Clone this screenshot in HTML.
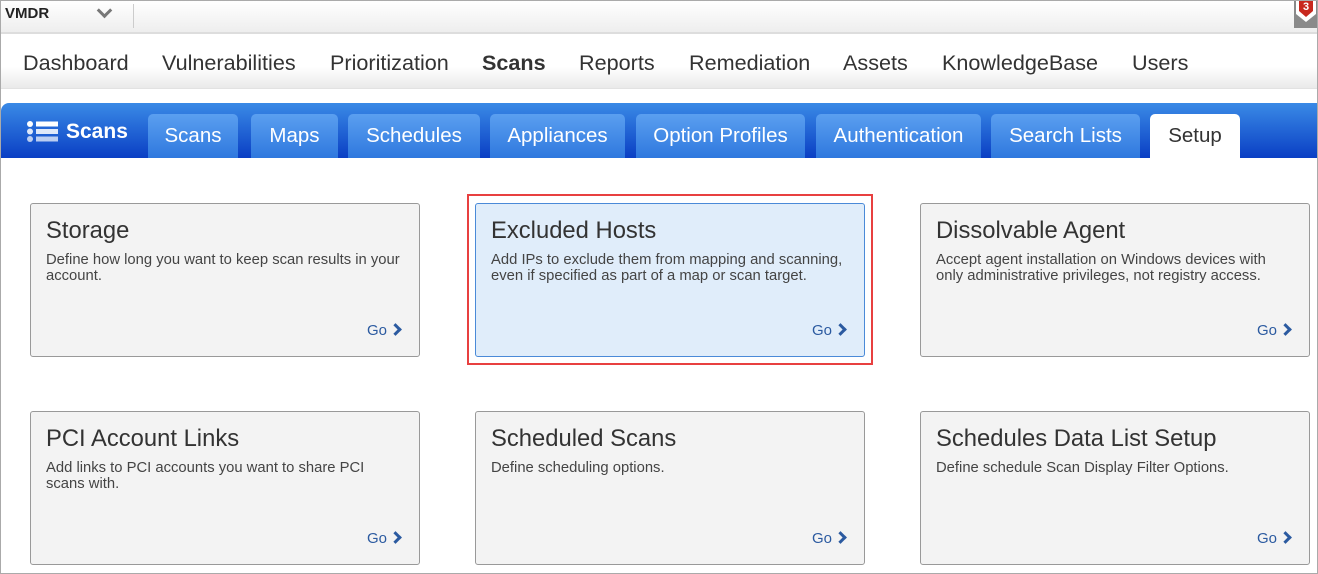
<!DOCTYPE html><html><head><style>
body{margin:0;width:1318px;height:574px;overflow:hidden;font-family:"Liberation Sans",Arial,sans-serif;background:#fff;position:relative}
.frame{position:absolute;left:0;top:0;width:1316px;height:572px;border:1px solid #aaa;pointer-events:none;z-index:9}
.top{position:absolute;left:1px;top:1px;width:1316px;height:31px;background:linear-gradient(#fff,#eee);border-bottom:2px solid #ddd}
.top b{position:absolute;left:4px;top:4px;font-size:15px;color:#222}
.top .chev{position:absolute;left:98px;top:4px;width:8px;height:8px;border-right:3px solid #777;border-bottom:3px solid #777;transform:rotate(45deg)}
.top .sep{position:absolute;left:132px;top:3px;width:1px;height:24px;background:#ccc}
.badge{position:absolute;left:1294px;top:0;width:24px;height:28px;background:#8a8a8a}
.badge svg{position:absolute;left:0;top:0}
.nav{position:absolute;left:1px;top:35px;width:1316px;height:53px;background:linear-gradient(#fff 60%,#eaeaea);border-bottom:1px solid #e2e2e2}
.nav span{position:absolute;top:15px;font-size:21.6px;color:#333}
.bar{position:absolute;left:1px;top:103px;width:1316px;height:55px;background:linear-gradient(#3a8ae6,#0a3fc4);border-radius:8px 0 0 0}
.bar .t{position:absolute;left:65px;top:17px;color:#fff;font-weight:bold;font-size:21px}
.tab{position:absolute;top:114px;height:44px;background:linear-gradient(#5b9ff0,#2f78de);border-radius:5px 5px 0 0;color:#fff;font-size:20.5px;text-align:center;line-height:44px}
.tab.s{background:#fff;color:#333}
.card{position:absolute;width:390px;height:154px;border:1px solid #999;border-radius:3px;background:#f3f3f3;box-sizing:border-box}
.card h2{margin:0;position:absolute;left:15px;top:13px;font-weight:normal;font-size:23.8px;color:#333}
.card p{margin:0;position:absolute;left:15px;top:48px;right:17px;font-size:14.8px;line-height:16px;color:#444}
.card .go{position:absolute;right:19px;bottom:17px;font-size:15px;color:#2b5aa0}
.card .go i{display:inline-block;width:6px;height:6px;border-right:3px solid #2b5aa0;border-top:3px solid #2b5aa0;transform:rotate(45deg);margin-left:4px;margin-bottom:1px}
.card.h{background:#e0edfa;border-color:#4a8ad8}
.red{position:absolute;left:467px;top:194px;width:402px;height:167px;border:2px solid #e84040}
</style></head><body>
<div class="frame"></div>
<div class="top"><b>VMDR</b><div class="chev"></div><div class="sep"></div></div>
<div class="badge"><svg width="24" height="28"><path d="M2 0H22V14L12 22L2 14Z" fill="#fff"/><path d="M5 0H19V11L12 17L5 11Z" fill="#c8281e"/><text x="12" y="10" font-size="11" font-weight="bold" fill="#fff" text-anchor="middle" font-family="Liberation Sans">3</text></svg></div>
<div class="nav">
<span style="left:22px">Dashboard</span><span style="left:161px">Vulnerabilities</span><span style="left:329px">Prioritization</span><span style="left:481px;font-weight:bold">Scans</span><span style="left:578px">Reports</span><span style="left:688px">Remediation</span><span style="left:842px">Assets</span><span style="left:941px">KnowledgeBase</span><span style="left:1131px">Users</span>
</div>
<div class="bar">
<svg style="position:absolute;left:25px;top:17px" width="34" height="23"><g fill="#fff"><circle cx="4" cy="4" r="3"/><circle cx="4" cy="11.5" r="3" opacity=".85"/><circle cx="4" cy="19" r="3" opacity=".7"/><rect x="10" y="1.5" width="22" height="5"/><rect x="10" y="9" width="22" height="5" opacity=".85"/><rect x="10" y="16.5" width="22" height="5" opacity=".7"/></g></svg>
<div class="t">Scans</div></div>
<div class="tab" style="left:148px;width:90px">Scans</div>
<div class="tab" style="left:251px;width:87px">Maps</div>
<div class="tab" style="left:348px;width:132px">Schedules</div>
<div class="tab" style="left:490px;width:135px">Appliances</div>
<div class="tab" style="left:636px;width:169px">Option Profiles</div>
<div class="tab" style="left:816px;width:165px">Authentication</div>
<div class="tab" style="left:991px;width:149px">Search Lists</div>
<div class="tab s" style="left:1150px;width:90px">Setup</div>

<div class="card" style="left:30px;top:203px"><h2>Storage</h2><p>Define how long you want to keep scan results in your account.</p><div class="go">Go<i></i></div></div>
<div class="red"></div>
<div class="card h" style="left:475px;top:203px"><h2>Excluded Hosts</h2><p>Add IPs to exclude them from mapping and scanning, even if specified as part of a map or scan target.</p><div class="go">Go<i></i></div></div>
<div class="card" style="left:920px;top:203px"><h2>Dissolvable Agent</h2><p>Accept agent installation on Windows devices with only administrative privileges, not registry access.</p><div class="go">Go<i></i></div></div>
<div class="card" style="left:30px;top:411px"><h2>PCI Account Links</h2><p>Add links to PCI accounts you want to share PCI scans with.</p><div class="go">Go<i></i></div></div>
<div class="card" style="left:475px;top:411px"><h2>Scheduled Scans</h2><p>Define scheduling options.</p><div class="go">Go<i></i></div></div>
<div class="card" style="left:920px;top:411px"><h2>Schedules Data List Setup</h2><p>Define schedule Scan Display Filter Options.</p><div class="go">Go<i></i></div></div>
</body></html>
